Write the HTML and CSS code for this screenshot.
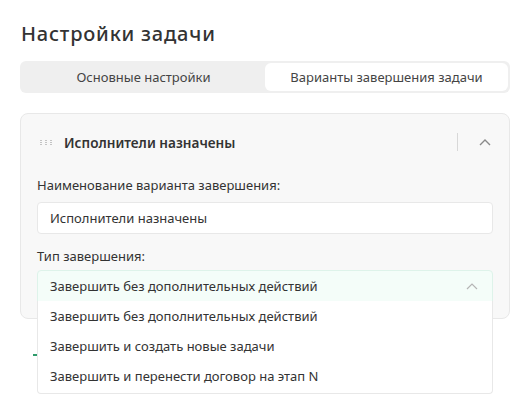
FILE: index.html
```
<!DOCTYPE html>
<html lang="ru">
<head>
    <meta charset="UTF-8">
    <meta name="viewport" content="width=device-width, initial-scale=1.0">
    <title>Настройки задачи</title>
    <link rel="stylesheet" href="styles.css">
</head>
<body>
    <div class="settings">
        <h1>Настройки задачи</h1>

        <div class="tabs">
            <div class="tab">Основные настройки</div>
            <div class="tab active">Варианты завершения задачи</div>
        </div>

        <div class="variant-card">
            <div class="variant-head">
                <span class="drag">
                    <i></i><i></i><i></i><i></i><i></i><i></i><i></i><i></i><i></i>
                </span>
                <span class="variant-title">Исполнители назначены</span>
                <span class="divider"></span>
                <svg class="chevron" width="12" height="7" viewBox="0 0 12 7">
                    <path d="M1 6 L6 1 L11 6" fill="none" stroke="#8a8a8a" stroke-width="1.4"/>
                </svg>
            </div>

            <label class="field-label">Наименование варианта завершения:</label>
            <div class="input">Исполнители назначены</div>

            <label class="field-label tight">Тип завершения:</label>
            <div class="select">
                <div class="select-value">
                    <span>Завершить без дополнительных действий</span>
                    <svg width="12" height="7" viewBox="0 0 12 7">
                        <path d="M1 6 L6 1 L11 6" fill="none" stroke="#b5b5b5" stroke-width="1.2"/>
                    </svg>
                </div>
                <ul class="options">
                    <li>Завершить без дополнительных действий</li>
                    <li>Завершить и создать новые задачи</li>
                    <li>Завершить и перенести договор на этап N</li>
                </ul>
            </div>
        </div>

        <div class="add-variant"></div>
    </div>
</body>
</html>
```

FILE: styles.css
```
body {
    margin: 0;
    min-height: 397px;
    font-family: "Noto Sans", Arial, sans-serif;
    color: #333;
    background-color: #fff;
}
.settings {
    padding: 20px 17px 60px 20px;
}
h1 {
    margin: 0 0 13px 1px;
    font-size: 20px;
    font-weight: 500;
    letter-spacing: 0.8px;
    line-height: 28px;
    color: #333;
}
.tabs {
    display: grid;
    grid-template-columns: 1fr 1fr;
    padding: 2px;
    background-color: #efefef;
    border-radius: 6px;
    height: 28px;
}
.tab {
    display: flex;
    align-items: center;
    justify-content: center;
    font-size: 13px;
    color: #444;
    border-radius: 6px;
}
.tab.active {
    background-color: #fff;
}
.variant-card {
    margin-top: 20px;
    background-color: #f8f8f8;
    border: 1px solid #e8e8e8;
    border-radius: 8px;
    padding: 0 16px 16px 16px;
    height: 188px;
}
.variant-head {
    display: flex;
    align-items: center;
    height: 56px;
    padding-left: 3px;
}
.drag {
    display: grid;
    grid-template-columns: repeat(3, 2px);
    gap: 1px 3px;
    margin-right: 12px;
}
.drag i {
    width: 2px;
    height: 1px;
    background-color: #c4c4c4;
}
.variant-title {
    flex: 1;
    font-size: 13.6px;
    font-weight: 600;
    color: #333;
}
.divider {
    width: 1px;
    height: 18px;
    background-color: #d8d8d8;
    margin-right: 21px;
}
.chevron {
    margin-right: 2px;
}
.field-label {
    display: block;
    font-size: 13px;
    color: #333;
    line-height: 18px;
    margin: 6px 0 8px;
}
.field-label.tight {
    margin-bottom: 5px;
}
.input {
    height: 30px;
    display: flex;
    align-items: center;
    padding: 0 12px;
    background-color: #fff;
    border: 1px solid #e8e8e8;
    border-radius: 4px;
    font-size: 13px;
    color: #333;
    margin-bottom: 13px;
}
.select {
    position: relative;
}
.select-value {
    height: 30px;
    display: flex;
    align-items: center;
    justify-content: space-between;
    padding: 0 14px 0 12px;
    background-color: #f4fdf9;
    border: 1px solid #def3ea;
    border-radius: 4px 4px 0 0;
    font-size: 13px;
    color: #333;
}
.options {
    position: absolute;
    left: 0;
    right: 0;
    top: 31px;
    margin: 0;
    padding: 0 0 2px;
    list-style: none;
    background-color: #fff;
    border: 1px solid #e8e8e8;
    border-top: none;
    border-radius: 0 0 4px 4px;
    z-index: 2;
}
.options li {
    height: 30px;
    display: flex;
    align-items: center;
    padding: 0 12px;
    font-size: 13px;
    color: #333;
}
.add-variant {
    width: 4px;
    height: 2px;
    margin: 35px 0 0 13px;
    background-color: #2e9b6b;
}
```
